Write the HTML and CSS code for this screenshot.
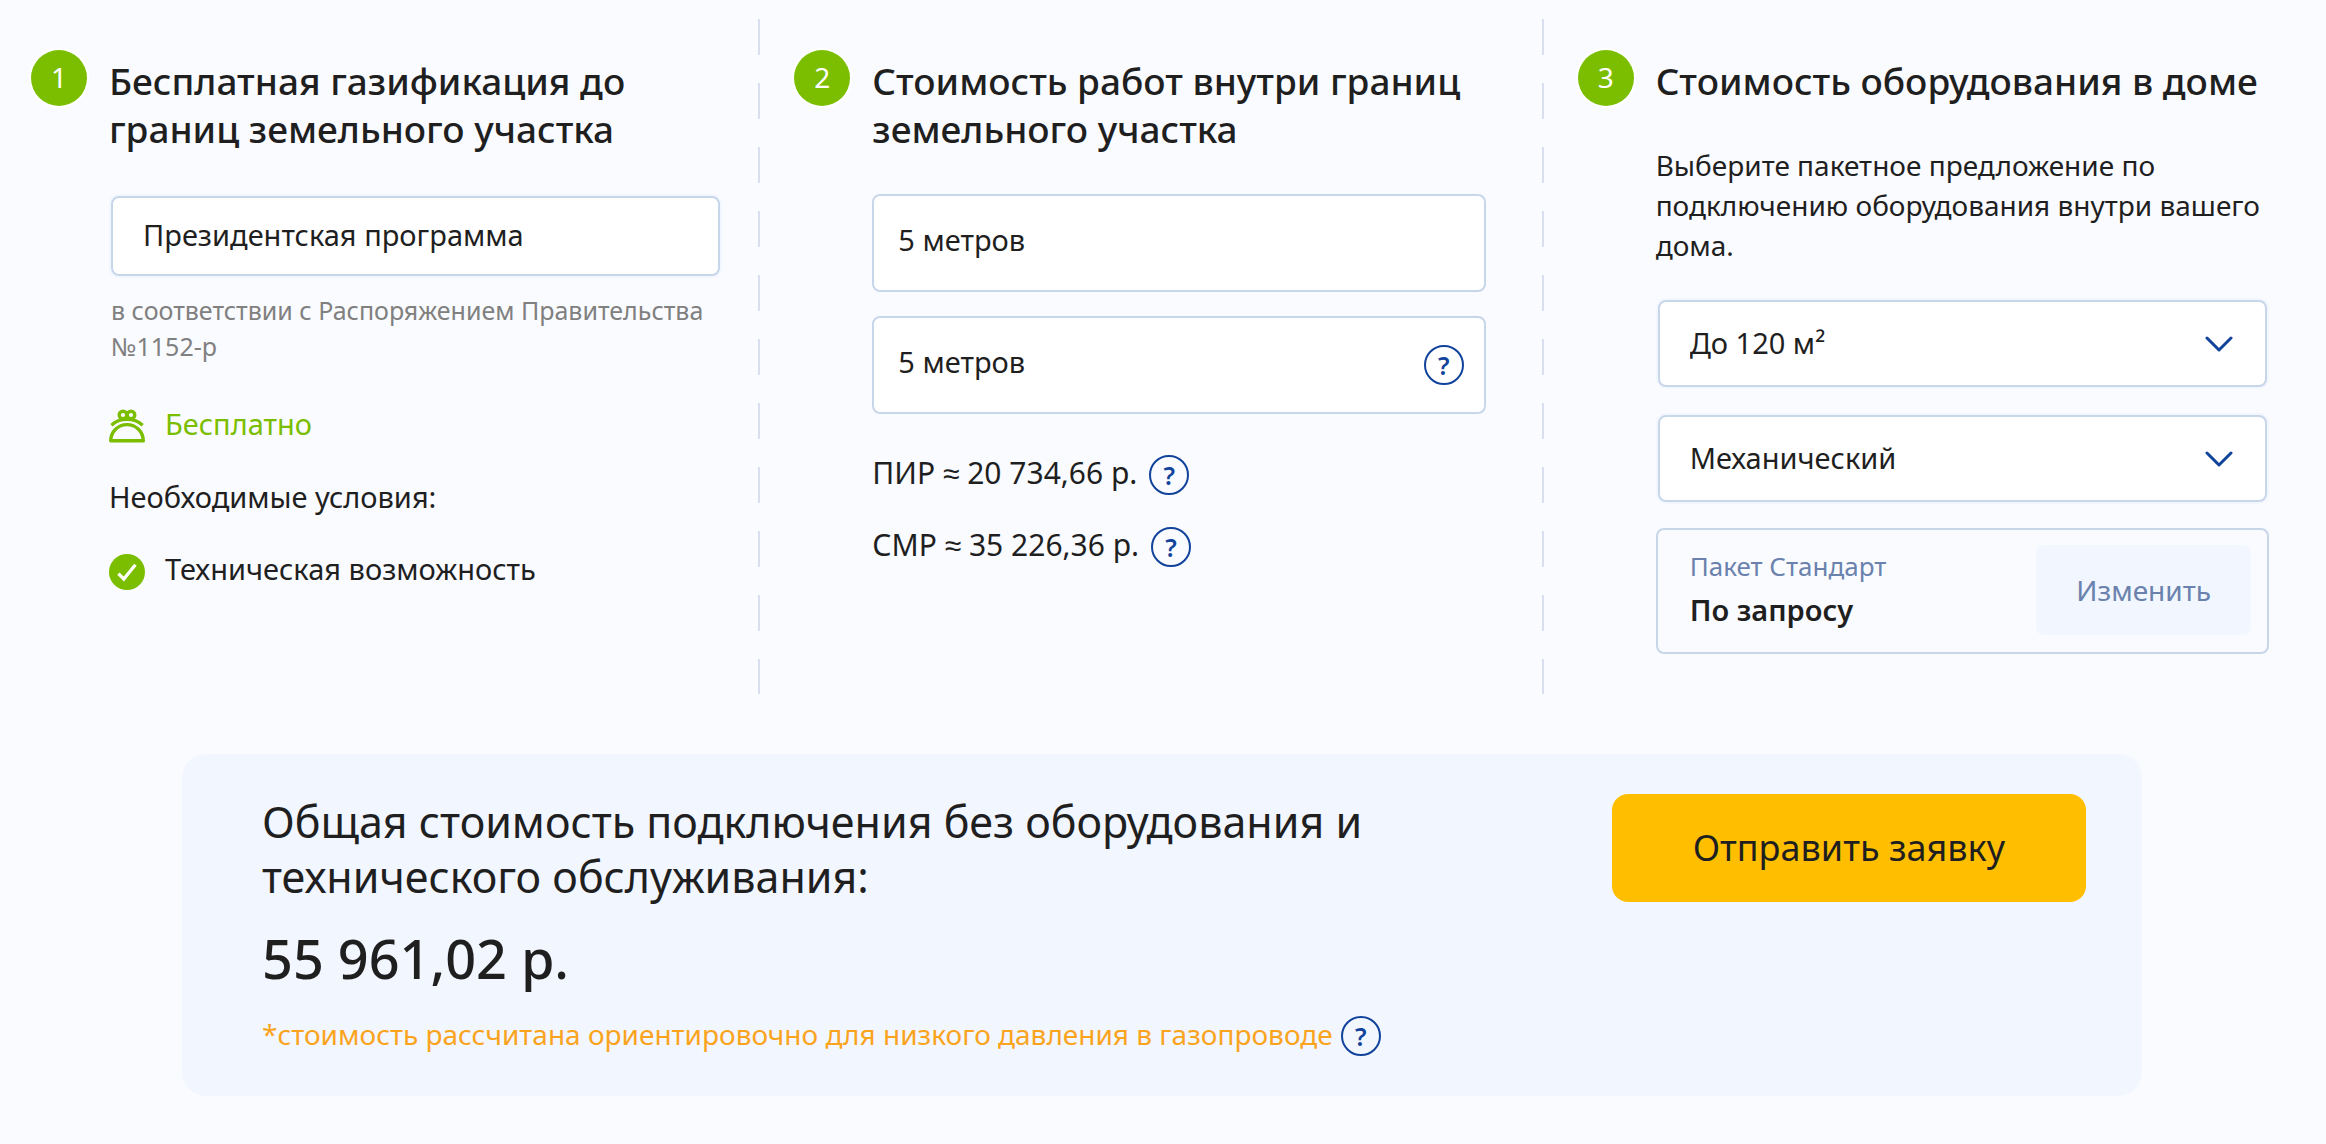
FILE: index.html
```html
<!DOCTYPE html>
<html lang="ru">
<head>
  <meta charset="utf-8">
  <meta name="viewport" content="width=device-width, initial-scale=1">
  <title>Калькулятор стоимости газификации</title>
  <link rel="stylesheet" href="styles.css">
</head>
<body>
  <main class="page">
    <div class="steps">
      <section class="step">
        <span class="badge">1</span>
        <div class="step-body">
          <h2 class="title">Бесплатная газификация до границ земельного участка</h2>
          <div class="program">
            <input class="control program-input" type="text" value="Президентская программа" aria-label="Программа" readonly>
            <p class="hint">в соответствии с Распоряжением Правительства №1152-р</p>
          </div>
          <div class="conditions">
            <p class="line free">
              <svg class="line-icon" viewBox="0 0 36 36" fill="none" stroke="currentColor" stroke-width="3.4" aria-hidden="true">
                <circle cx="14" cy="6" r="3.8"/>
                <circle cx="22" cy="6" r="3.8"/>
                <path d="M2.4 16.2C6.4 12.4 11.8 10.4 18 10.4s11.6 2 15.6 5.8"/>
                <path d="M1.7 31.8C1.9 22.6 9 15.6 18 15.6s16.1 7 16.3 16.2z" stroke-linejoin="round"/>
              </svg>
              <span>Бесплатно</span>
            </p>
            <p class="line">Необходимые условия:</p>
            <p class="line">
              <svg class="line-icon" viewBox="0 0 36 36" aria-hidden="true">
                <circle cx="18" cy="18" r="18" fill="#7bbe00"/>
                <path d="M9.4 19.6l5.4 5.4L26.4 10.8" fill="none" stroke="#fff" stroke-width="3.2"/>
              </svg>
              <span>Техническая возможность</span>
            </p>
          </div>
        </div>
      </section>

      <div class="divider divider-first"></div>

      <section class="step">
        <span class="badge">2</span>
        <div class="step-body">
          <h2 class="title">Стоимость работ внутри границ земельного участка</h2>
          <div class="fields">
            <input class="control meters" type="text" value="5 метров" aria-label="Расстояние до дома">
            <div class="overlay">
              <input class="control meters" type="text" value="5 метров" aria-label="Длина внутри участка">
              <button class="help overlay-help" type="button" aria-label="Подсказка">?</button>
            </div>
          </div>
          <div class="costs">
            <p class="cost"><span class="sum">ПИР ≈ 20 734,66 р.</span><button class="help" type="button">?</button></p>
            <p class="cost"><span class="sum">СМР ≈ 35 226,36 р.</span><button class="help" type="button">?</button></p>
          </div>
        </div>
      </section>

      <div class="divider divider-second"></div>

      <section class="step">
        <span class="badge">3</span>
        <div class="step-body">
          <h2 class="title">Стоимость оборудования в доме</h2>
          <p class="intro">Выберите пакетное предложение по подключению оборудования внутри вашего дома.</p>
          <div class="selects">
            <div class="overlay">
              <select class="control select" aria-label="Площадь дома"><option>До 120 м²</option></select>
              <svg class="chevron" viewBox="0 0 28 16" aria-hidden="true"><path d="M2 2l12 12L26 2"/></svg>
            </div>
            <div class="overlay">
              <select class="control select" aria-label="Тип оборудования"><option>Механический</option></select>
              <svg class="chevron" viewBox="0 0 28 16" aria-hidden="true"><path d="M2 2l12 12L26 2"/></svg>
            </div>
          </div>
          <div class="package">
            <div>
              <p class="package-name">Пакет Стандарт</p>
              <p class="package-price">По запросу</p>
            </div>
            <button class="change" type="button">Изменить</button>
          </div>
        </div>
      </section>
    </div>

    <section class="summary">
      <div class="summary-text">
        <p class="summary-title">Общая стоимость подключения без оборудования и технического обслуживания:</p>
        <p class="total">55 961,02 р.</p>
        <p class="cost note"><span>*стоимость рассчитана ориентировочно для низкого давления в газопроводе</span><button class="help" type="button">?</button></p>
      </div>
      <button class="submit" type="button">Отправить заявку</button>
    </section>
  </main>
</body>
</html>
```
FILE: styles.css
```css
* {
  box-sizing: border-box;
}

body,
h2,
p {
  margin: 0;
}

body {
  background: #fafbff;
  color: #1f1f1f;
  font: 400 28px/40px "Noto Sans", sans-serif;
}

button,
input,
select {
  font: inherit;
  color: inherit;
  margin: 0;
}

button {
  border: 0;
  padding: 0;
  cursor: pointer;
}

.page {
  padding: 19px 0 48px;
}

.steps {
  display: flex;
  padding: 0 57px 0 31px;
}

.step {
  flex: 1 1 0;
  min-width: 0;
  min-height: 675px;
  display: flex;
  gap: 22px;
  padding-top: 31px;
}

.badge {
  flex: none;
  width: 56px;
  height: 56px;
  border-radius: 50%;
  background: #7bbe00;
  box-shadow: 0 0 0 2px #fff;
  color: #fff;
  line-height: 54px;
  text-align: center;
}

.step-body {
  flex: 1;
  min-width: 0;
  padding-top: 7px;
}

.divider {
  flex: none;
  width: 2px;
  background: repeating-linear-gradient(#dadff0 0 36px, transparent 36px 64px);
}

.divider-first {
  margin: 0 34px 0 36px;
}

.divider-second {
  margin: 0 34px 0 56px;
}

.title {
  font-size: 37px;
  font-weight: 500;
  line-height: 48px;
}

.control {
  display: block;
  width: 100%;
  border: 2px solid #c8d6ea;
  border-radius: 8px;
  background: #fff;
  font-size: 29px;
}

.program {
  margin: 43px 2px 0;
}

.program-input {
  height: 80px;
  padding: 0 30px 4px;
  box-shadow: 0 0 0 2px #f2f6ff;
}

.hint {
  margin-top: 16px;
  color: #808080;
  font-size: 25px;
  line-height: 36px;
}

.conditions {
  display: flex;
  flex-direction: column;
  gap: 32px;
  margin-top: 40px;
  font-size: 29px;
}

.line {
  display: flex;
  gap: 20px;
}

.line-icon {
  flex: none;
  width: 36px;
  height: 36px;
  margin-top: 5px;
}

.free {
  color: #7bbe00;
}

.fields {
  display: grid;
  gap: 24px;
  margin-top: 41px;
}

.meters {
  height: 98px;
  padding: 0 24px 8px;
}

.overlay {
  display: grid;
  align-items: center;
}

.overlay > * {
  grid-area: 1 / 1;
}

.help {
  flex: none;
  width: 40px;
  height: 40px;
  border: 2px solid #11439b;
  border-radius: 50%;
  background: transparent;
  color: #11439b;
  font-size: 25px;
  font-weight: 600;
  line-height: 36px;
  text-align: center;
}

.overlay-help {
  justify-self: end;
  margin-right: 22px;
}

.costs {
  display: flex;
  flex-direction: column;
  gap: 32px;
  margin-top: 41px;
}

.cost {
  display: flex;
  gap: 12px;
  line-height: 36px;
}

.sum {
  font-size: 30px;
}

.intro {
  margin-top: 40px;
}

.selects {
  display: grid;
  gap: 28px;
  margin: 35px 2px 0;
}

.select {
  height: 87px;
  padding: 0 30px 2px;
  appearance: none;
  box-shadow: 0 0 0 2px #f2f6ff;
}

.chevron {
  justify-self: end;
  width: 28px;
  height: 16px;
  margin-right: 34px;
  fill: none;
  stroke: #11439b;
  stroke-width: 3;
  stroke-linecap: round;
  stroke-linejoin: round;
  pointer-events: none;
}

.package {
  display: flex;
  align-items: center;
  justify-content: space-between;
  margin-top: 26px;
  padding: 15px 16px 17px 32px;
  border: 2px solid #c8d6ea;
  border-radius: 8px;
}

.package-name {
  color: #6a82ad;
  font-size: 26px;
}

.package-price {
  font-size: 29px;
  font-weight: 600;
  line-height: 48px;
}

.change {
  padding: 25px 40px;
  border-radius: 8px;
  background: #f2f6ff;
  color: #6a82ad;
}

.summary {
  display: flex;
  align-items: flex-start;
  justify-content: space-between;
  margin: 60px 184px 0 182px;
  padding: 40px 56px 40px 80px;
  border-radius: 24px;
  background: #f2f6ff;
}

.summary-text {
  max-width: 1160px;
}

.summary-title {
  font-size: 43px;
  line-height: 55px;
}

.total {
  margin-top: 22px;
  font-size: 54px;
  font-weight: 500;
  line-height: 64px;
}

.note {
  gap: 8px;
  margin-top: 26px;
  color: #faa41e;
}

.submit {
  padding: 30px 81px;
  border-radius: 16px;
  background: #ffbf00;
  font-size: 36px;
  line-height: 48px;
}
```
